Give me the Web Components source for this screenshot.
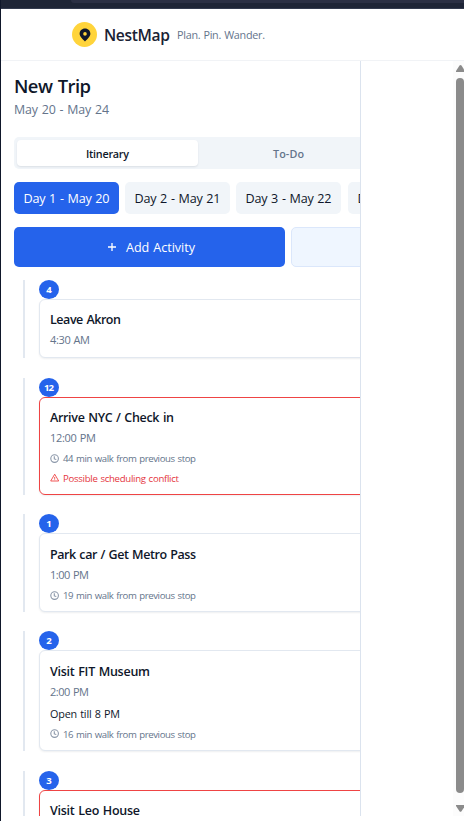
<!DOCTYPE html>
<html lang="en"><head><meta charset="utf-8"><title>NestMap</title>
<style>
html,body{margin:0;height:100%;overflow:hidden;background:#fff}
body{font-family:"Open Sans","Noto Sans",sans-serif;color:#0f172a}
</style></head><body>
<nest-app></nest-app>
<script>
const define=(name,html,setup)=>customElements.define(name,class extends HTMLElement{
  connectedCallback(){
    if(this.shadowRoot)return;
    const root=this.attachShadow({mode:'open'});
    const t=document.createElement('template');
    t.innerHTML=typeof html==='function'?html(this):html;
    root.append(t.content.cloneNode(true));
    if(setup)setup(this,root);
  }
});

/* Single line of text tracked to a given width (w, px) */
define('ui-text','<style>:host{display:inline-block;white-space:nowrap;flex:none}span{display:inline-block;word-spacing:.06em}</style><span><slot></slot></span>',(el,root)=>{
  const s=root.querySelector('span'),w=+el.getAttribute('w'),n=el.textContent.length;
  if(!w)return;
  const now=s.getBoundingClientRect().width;
  s.style.letterSpacing=((w-now)/(n-1)).toFixed(3)+'px';
  el.style.width=w+'px';
});

define('ui-icon',el=>({
  pin:`<svg width="16" height="16" viewBox="0 0 16 16"><path fill="#0f172a" fill-rule="evenodd" d="M8 1.6c-3.2 0-5.4 2.3-5.4 5.2C2.6 9.7 5.7 12 8 14.6c2.3-2.6 5.4-4.9 5.4-7.8 0-2.9-2.2-5.2-5.4-5.2zm0 3.5a1.8 1.8 0 1 1 0 3.6 1.8 1.8 0 0 1 0-3.6z"/></svg>`,
  plus:`<svg width="10" height="10" viewBox="0 0 10 10"><path stroke="#fff" stroke-width="1.3" d="M5 1v8M1 5h8"/></svg>`,
  clock:`<svg width="10" height="10" viewBox="0 0 10 10" fill="none" stroke="#8b97a9" stroke-width="1.1"><circle cx="4.6" cy="4.6" r="3.8"/><path d="M4.3 2.3v2.6l2 .7"/></svg>`,
  warn:`<svg width="10" height="10" viewBox="0 0 10 10" fill="none" stroke="#ef4444" stroke-width=".9" stroke-linejoin="round"><path d="M4.7 1.2 8.7 8H.7zM4.7 4v1.9M4.7 6.4v.7"/></svg>`
}[el.getAttribute('name')]+'<style>:host{display:block;flex:none}svg{display:block}</style>'));

define('app-header',`<style>
:host{display:flex;align-items:center;height:51px;box-sizing:content-box;border-bottom:1px solid #f1f3f6;padding-left:71px;background:#fff}
.logo{width:25px;height:25px;border-radius:50%;background:#ffd43b;display:grid;place-items:center;margin-right:7px}
.name{font-size:15.6px;font-weight:600;margin-right:7px;color:#1a2234}.tag{font-size:10.8px;color:#64748b;padding-top:0}
</style><div class="logo"><ui-icon name="pin"></ui-icon></div><ui-text class="name" w="66">NestMap</ui-text><ui-text class="tag" w="88">Plan. Pin. Wander.</ui-text>`);

define('segment-tabs',`<style>
:host{display:flex;flex:none;width:368px;height:32px;box-sizing:border-box;padding:3px;background:#f1f5f9;border-radius:5px;font-size:10.8px;font-weight:550}
div{flex:1;display:grid;place-items:center;border-radius:4px;color:#64748b}
.on{background:#fff;color:#0f172a;box-shadow:0 1px 2px #0f172a18}
</style><div class="on"><ui-text w="43">Itinerary</ui-text></div><div><ui-text w="31">To-Do</ui-text></div>`);

define('day-chip',`<style>
:host{display:flex;align-items:center;justify-content:center;flex:none;width:105px;height:32px;border-radius:5px;background:#f1f5f9;font-size:12.6px}
:host([active]){background:#2563eb;color:#fff}
</style><slot></slot>`);

define('action-row',`<style>
:host{display:flex;gap:6px}
.add{width:271px;height:40px;border-radius:5px;background:#2563eb;color:#fff;display:flex;align-items:center;justify-content:center;gap:9px;font-size:12.6px;flex:none;box-sizing:border-box;padding-left:3px}
.more{flex:none;width:271px;height:40px;box-sizing:border-box;border:1px solid #dbe7fb;border-radius:5px;background:#eff6ff}
</style><div class="add"><ui-icon name="plus"></ui-icon><ui-text w="69">Add Activity</ui-text></div><div class="more"></div>`);

define('stop-item',`<style>
:host{display:block;box-sizing:border-box;border-left:2px solid #e2e8f0;padding-left:14px;width:360px;flex:none}
.wrap{display:flex;flex-direction:column;height:100%}
.badge{width:20px;height:19px;border-radius:50%;background:#2563eb;color:#fff;font-size:9.6px;font-weight:700;display:grid;place-items:center;flex:none}
.card{flex:1;box-sizing:border-box;border:1px solid #e2e8f0;border-radius:6px;background:#fff;padding:9px 10px 0;box-shadow:0 1px 2px #0f172a12;min-height:0}
:host([conflict]) .card{border-color:#ef4444}
</style><div class="wrap"><div class="badge"><slot name="n"></slot></div><div class="card"><slot></slot></div></div>`);

define('stop-line',`<style>
:host{display:flex;align-items:center;gap:3px;height:19px;font-size:10.8px;color:#64748b}
:host([kind=title]){height:20px;font-size:12.5px;font-weight:560;color:#0f172a}
:host([kind=time]){height:21px;font-size:11px}
:host([kind=note]){height:24px;font-size:10.8px;color:#0f172a}
:host([kind=walk]){height:21px}
:host([kind=walk]),:host([kind=warn]){font-size:9.6px}
:host([kind=warn]){height:18px;color:#e5343d}
:host([lower]){padding-top:1px;height:21px}
:host([lower]) + *{margin-top:-1px}
</style><slot></slot>`);

define('trip-panel',`<style>
:host{display:flex;flex-direction:column;box-sizing:border-box;width:360px;height:755px;border-right:1px solid #dbe3ee;padding:12px 0 0 13px;overflow:hidden;background:#fff;flex:none}
h1{font-size:18.4px;font-weight:600;line-height:25px;margin:0;height:27px}
.date{font-size:12.4px;line-height:20px;height:20px;color:#64748b;flex:none}
h1,.days,action-row{flex:none}
segment-tabs{margin-top:17px}
.days{display:flex;gap:6px;margin-top:13px}
action-row{margin-top:13px}
.stops{display:flex;flex-direction:column;margin:13px 0 0 9px}
</style>
<h1><ui-text w="77">New Trip</ui-text></h1>
<div class="date"><ui-text w="95">May 20 - May 24</ui-text></div>
<segment-tabs></segment-tabs>
<div class="days"><day-chip active><ui-text w="86">Day 1 - May 20</ui-text></day-chip><day-chip><ui-text w="86">Day 2 - May 21</ui-text></day-chip><day-chip><ui-text w="86">Day 3 - May 22</ui-text></day-chip><day-chip style="margin-left:1px"><ui-text w="86">Day 4 - May 23</ui-text></day-chip></div>
<action-row></action-row>
<div class="stops">
<stop-item style="height:78px"><span slot="n">4</span><stop-line kind="title"><ui-text w="71">Leave Akron</ui-text></stop-line><stop-line kind="time"><ui-text w="40">4:30 AM</ui-text></stop-line></stop-item>
<stop-item conflict style="height:117px;margin-top:20px"><span slot="n"><ui-text w="10">12</ui-text></span><stop-line kind="title"><ui-text w="124">Arrive NYC / Check in</ui-text></stop-line><stop-line kind="time"><ui-text w="46">12:00 PM</ui-text></stop-line><stop-line kind="walk"><ui-icon name="clock"></ui-icon><ui-text w="133">44 min walk from previous stop</ui-text></stop-line><stop-line kind="warn"><ui-icon name="warn"></ui-icon><ui-text w="116">Possible scheduling conflict</ui-text></stop-line></stop-item>
<stop-item style="height:98px;margin-top:19px"><span slot="n">1</span><stop-line kind="title" style="height:22px"><ui-text w="146">Park car / Get Metro Pass</ui-text></stop-line><stop-line kind="time" style="height:19px"><ui-text w="39">1:00 PM</ui-text></stop-line><stop-line kind="walk" style="height:23px"><ui-icon name="clock"></ui-icon><ui-text w="133">19 min walk from previous stop</ui-text></stop-line></stop-item>
<stop-item style="height:120px;margin-top:19px"><span slot="n">2</span><stop-line kind="title" style="height:22px"><ui-text w="100">Visit FIT Museum</ui-text></stop-line><stop-line kind="time" style="height:19px"><ui-text w="39">2:00 PM</ui-text></stop-line><stop-line kind="note"><ui-text w="70">Open till 8 PM</ui-text></stop-line><stop-line kind="walk" style="height:18px"><ui-icon name="clock"></ui-icon><ui-text w="133">16 min walk from previous stop</ui-text></stop-line></stop-item>
<stop-item conflict style="height:117px;margin-top:20px"><span slot="n">3</span><stop-line kind="title"><ui-text w="90">Visit Leo House</ui-text></stop-line></stop-item>
</div>`);

define('scroll-rail',`<style>
:host{display:flex;flex-direction:column;width:11px;height:755px;background:#fcfcfc;overflow:hidden;align-items:flex-start;box-sizing:border-box;padding:4px 0 4px 3px}
.thumb{width:8px;flex:1;background:#8b8b8b;border-radius:4px;margin:5px 0 12px}
svg{display:block;flex:none}
</style><svg width="9" height="8" viewBox="0 0 9 8"><path fill="#8b8b8b" d="M0 6 3.5.6Q4.5-.4 5.5.6L9 6v1H0z"/></svg><div class="thumb"></div><svg width="9" height="7" viewBox="0 0 9 7"><path fill="#8b8b8b" d="M0 0h9v1L5.5 6.3Q4.5 7.4 3.5 6.3L0 1z"/></svg>`);

define('nest-app',`<style>
:host{display:flex;flex-direction:column;height:821px;width:464px;box-sizing:border-box;border-left:1px solid #0f172a;overflow:hidden}
.chrome{height:9px;flex:none;background:#1e2536;display:flex;box-sizing:border-box;border-bottom:1px solid #333b4e;padding-left:70px}
.chrome i{flex:1;height:3px;background:#2b3044;border-radius:0 0 0 3px}
app-header{flex:none}
main{display:flex;justify-content:space-between}
</style><div class="chrome"><i></i></div><app-header></app-header><main><trip-panel></trip-panel><scroll-rail></scroll-rail></main>`);
</script></body></html>
